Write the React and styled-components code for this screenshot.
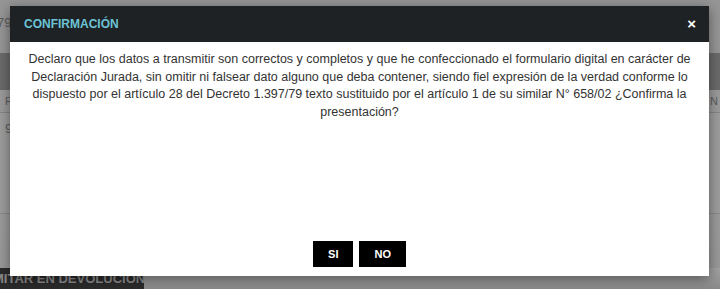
import styled, { createGlobalStyle } from 'styled-components'

const GlobalStyle = createGlobalStyle`
    html, body {
        margin: 0;
        padding: 0;
        background: #959595;
        font-family: "Liberation Sans", Arial, sans-serif;
    }
`

const Page = styled.div`
    width: 720px;
    height: 289px;
    overflow: hidden;
    display: flex;
    flex-direction: column;
    background: #969696;
    color: #555;
    font-size: 13px;
`

const TopLine = styled.div`
    height: 53px;
    padding: 15px 0 0 0;
    box-sizing: border-box;
    margin-left: -3px;
    color: #5a5a5a;
`

const Band = styled.div`
    height: 37px;
    background: #6b6b6b;
`

const HeadRow = styled.div`
    height: 22px;
    display: flex;
    justify-content: space-between;
    align-items: center;
    padding: 0 2px 0 5px;
    background: #9b9b9b;
    border-bottom: 1px solid #858585;
    color: #5c5c5c;
    font-size: 11px;
`

const DataRow = styled.div`
    height: 101px;
    padding: 8px 0 0 5px;
    box-sizing: border-box;
    border-bottom: 1px solid #888;
    background: #9d9d9d;
    color: #5c5c5c;
`

const Spacer = styled.div`
    flex: 1;
    background: linear-gradient(#9c9c9c, #999);
`

const Footer = styled.div`
    height: 21px;
    display: flex;
    background: linear-gradient(#a3a3a3, #8a8a8a);
`

const FooterBtn = styled.div`
    width: 144px;
    background: #2b2b2b;
    color: #8c8c8c;
    font-weight: bold;
    font-size: 13px;
    padding: 3px 0 0 0;
    box-sizing: border-box;
    text-indent: -7px;
    white-space: nowrap;
    overflow: hidden;
`

const Overlay = styled.div`
    position: fixed;
    inset: 0;
    padding-top: 6px;
`

const Modal = styled.div`
    width: 699px;
    margin-left: 10px;
    display: flex;
    flex-direction: column;
    box-shadow: 0 3px 12px rgba(0, 0, 0, 0.45);
`

const Header = styled.div`
    height: 36px;
    display: flex;
    align-items: center;
    justify-content: space-between;
    padding: 0 13px 0 14px;
    background: #1f2225;
`

const Title = styled.h4`
    margin: 0;
    font-size: 12px;
    font-weight: bold;
    color: #6cc3d5;
    letter-spacing: 0;
`

const Close = styled.span`
    color: #fff;
    font-size: 15px;
    font-weight: bold;
    line-height: 1;
    margin-top: -1px;
`

const Body = styled.div`
    height: 234px;
    box-sizing: border-box;
    background: #fff;
    display: flex;
    flex-direction: column;
    justify-content: space-between;
    padding: 9px 14px 9px;
`

const Text = styled.p`
    margin: 0;
    text-align: center;
    color: #333;
    font-size: 12.5px;
    line-height: 17.5px;
`

const Actions = styled.div`
    display: flex;
    justify-content: center;
    gap: 6px;
`

const Button = styled.button`
    height: 26px;
    padding: 0 15px;
    border: 0;
    background: #000;
    color: #fff;
    font-family: "Liberation Sans", Arial, sans-serif;
    font-size: 11px;
    font-weight: bold;
    cursor: pointer;
`

export default function App() {
    return (
        <>
            <GlobalStyle />
            <Page>
                <TopLine>79</TopLine>
                <Band />
                <HeadRow>
                    <span>R</span>
                    <span>N</span>
                </HeadRow>
                <DataRow>9</DataRow>
                <Spacer />
                <Footer>
                    <FooterBtn>MITAR EN DEVOLUCIÓN</FooterBtn>
                </Footer>
            </Page>
            <Overlay>
                <Modal>
                    <Header>
                        <Title>CONFIRMACIÓN</Title>
                        <Close>×</Close>
                    </Header>
                    <Body>
                        <Text>
                            Declaro que los datos a transmitir son correctos y completos y que he confeccionado el formulario digital en carácter de Declaración Jurada, sin omitir ni falsear dato alguno que deba contener, siendo fiel expresión de la verdad conforme lo dispuesto por el artículo 28 del Decreto 1.397/79 texto sustituido por el artículo 1 de su similar N° 658/02 ¿Confirma la presentación?
                        </Text>
                        <Actions>
                            <Button>SI</Button>
                            <Button>NO</Button>
                        </Actions>
                    </Body>
                </Modal>
            </Overlay>
        </>
    )
}
